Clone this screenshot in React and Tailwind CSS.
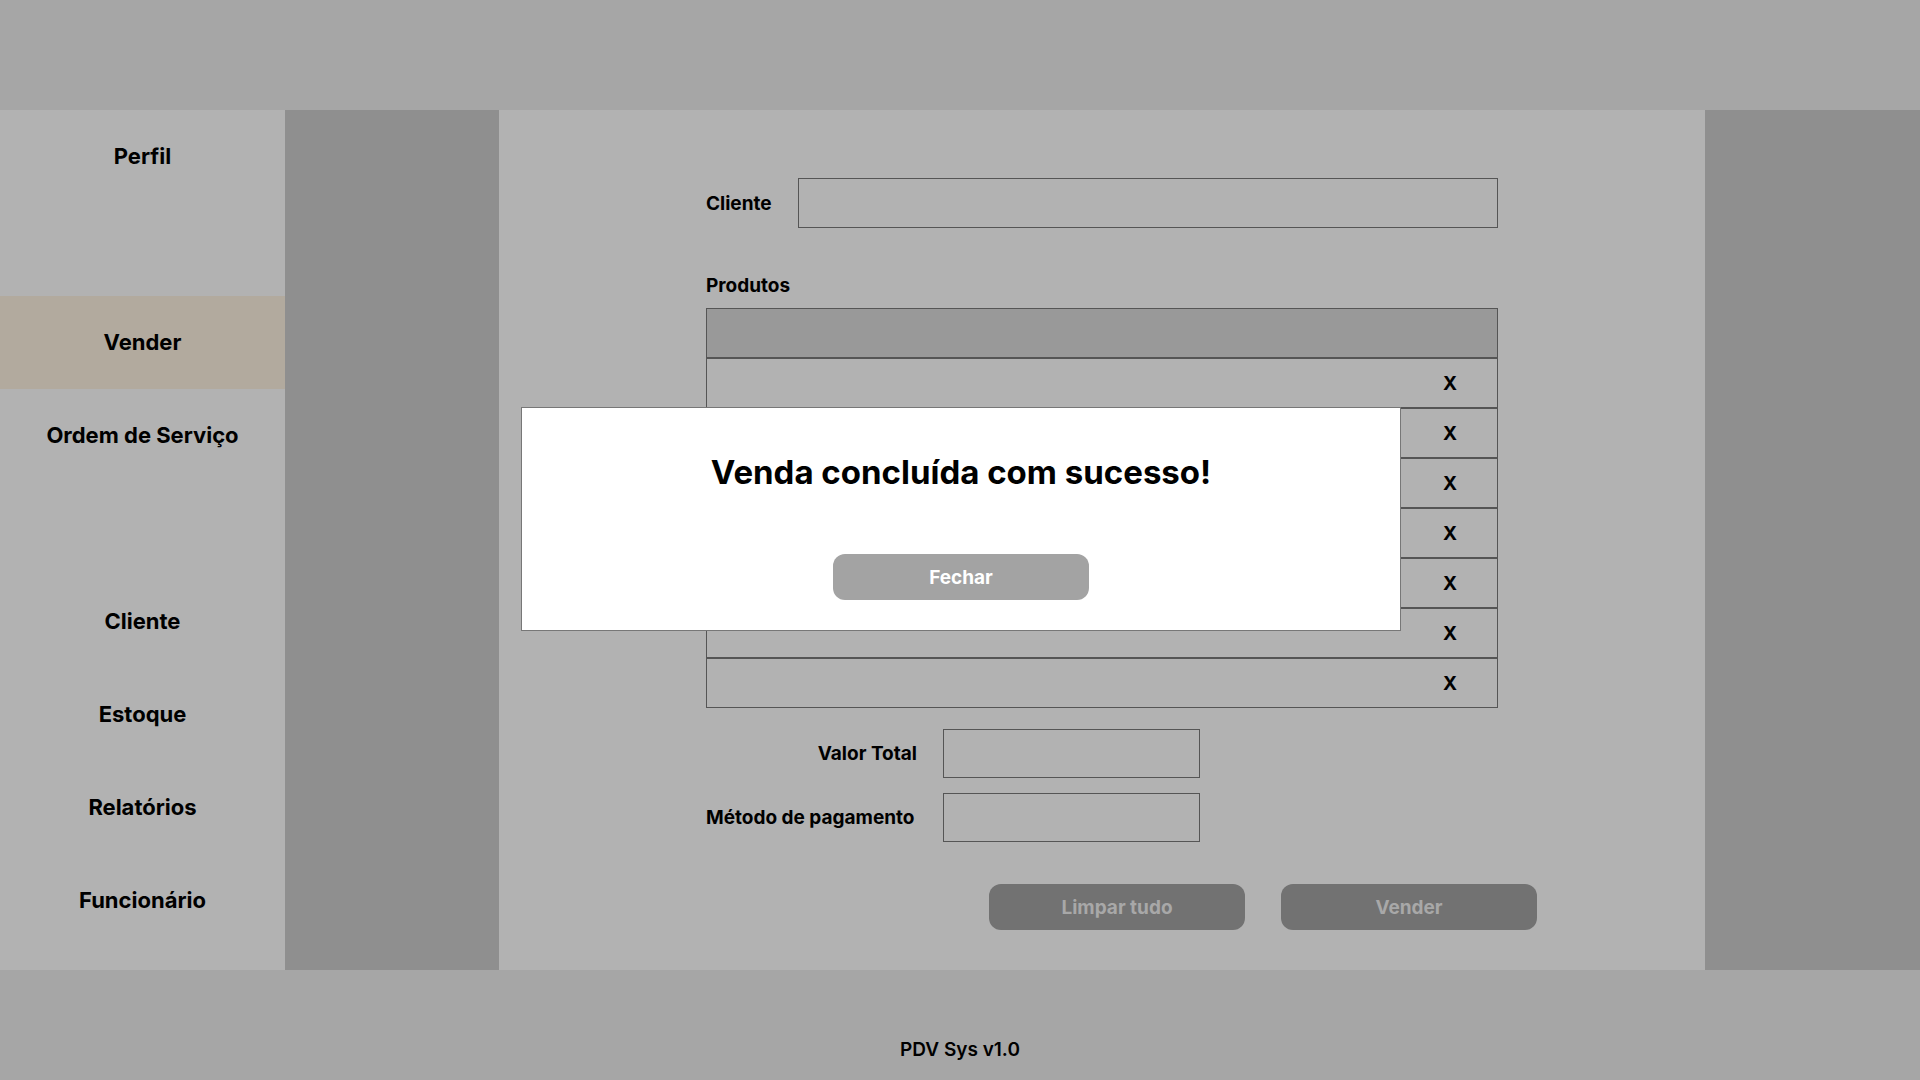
export default function App() {
  const rows = [0, 1, 2, 3, 4, 5, 6];
  return (
    <div
      className="relative w-[1920px] h-[1080px] flex flex-col overflow-hidden text-black"
      style={{ fontFamily: "Inter, 'Noto Sans', sans-serif" }}
    >
      <div className="h-[110px] bg-[#a6a6a6] shrink-0" />
      <div className="h-[860px] flex shrink-0">
        {/* Sidebar */}
        <div className="w-[285px] bg-[#b2b2b2] flex flex-col text-[22px] font-bold">
          <div className="h-[93px] flex items-center justify-center">Perfil</div>
          <div className="h-[93px]" />
          <div className="h-[93px] flex items-center justify-center bg-[#b2aa9e]">Vender</div>
          <div className="h-[93px] flex items-center justify-center">Ordem de Serviço</div>
          <div className="h-[93px]" />
          <div className="h-[93px] flex items-center justify-center">Cliente</div>
          <div className="h-[93px] flex items-center justify-center">Estoque</div>
          <div className="h-[93px] flex items-center justify-center">Relatórios</div>
          <div className="h-[93px] flex items-center justify-center">Funcionário</div>
        </div>
        <div className="w-[214px] bg-[#8f8f8f]" />
        {/* Main */}
        <div className="w-[1206px] bg-[#b2b2b2] flex flex-col pt-[68px] pl-[207px] text-[19px] font-bold">
          <div className="flex items-center">
            <div className="w-[92px] pt-[2px]">Cliente</div>
            <div className="w-[700px] h-[50px] border border-[#555]" />
          </div>
          <div className="mt-[46px] h-[24px] leading-[24px]">Produtos</div>
          <div className="mt-[10px] w-[792px] border border-[#555]">
            <div className="h-[48px] bg-[#999999]" />
            {rows.map((r) => (
              <div
                key={r}
                className="h-[50px] border-t-2 border-[#555] flex items-center justify-end pr-[40px] pt-[2px]"
              >
                X
              </div>
            ))}
          </div>
          <div className="mt-[21px] flex items-center">
            <div className="w-[211px] text-right pt-[2px]">Valor Total</div>
            <div className="ml-[26px] w-[257px] h-[49px] border border-[#555]" />
          </div>
          <div className="mt-[15px] flex items-center">
            <div className="w-[211px] text-left whitespace-nowrap pt-[2px]">Método de pagamento</div>
            <div className="ml-[26px] w-[257px] h-[49px] border border-[#555]" />
          </div>
          <div className="mt-[42px] ml-[283px] flex gap-[36px]">
            <div className="w-[256px] h-[46px] rounded-[12px] bg-[#727272] text-[#a8a8a8] flex items-center justify-center pt-[2px]">
              Limpar tudo
            </div>
            <div className="w-[256px] h-[46px] rounded-[12px] bg-[#727272] text-[#a8a8a8] flex items-center justify-center pt-[2px]">
              Vender
            </div>
          </div>
        </div>
        <div className="flex-1 bg-[#8f8f8f]" />
      </div>
      <div className="h-[110px] bg-[#a6a6a6] shrink-0 flex justify-center pt-[68px] text-[19px] font-semibold leading-[24px]">
        PDV Sys v1.0
      </div>

      {/* Modal */}
      <div className="absolute left-[521px] top-[407px] w-[880px] h-[224px] bg-white border border-[#777] flex flex-col items-center">
        <div className="mt-[44px] text-[33px] font-bold leading-[40px]">
          Venda concluída com sucesso!
        </div>
        <div className="mt-[62px] w-[256px] h-[46px] rounded-[12px] bg-[#a3a3a3] text-white text-[19px] font-bold flex items-center justify-center pt-[2px]">
          Fechar
        </div>
      </div>
    </div>
  );
}
